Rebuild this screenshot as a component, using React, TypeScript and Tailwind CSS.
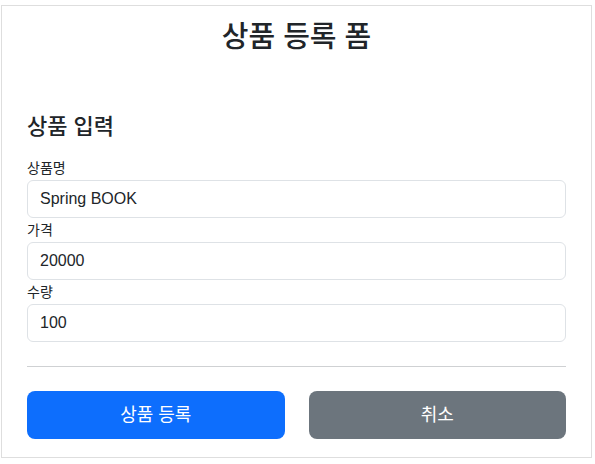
import { useState } from 'react'

type Field = {
  id: string
  label: string
  value: string
}

const initialFields: Field[] = [
  { id: 'itemName', label: '상품명', value: 'Spring BOOK' },
  { id: 'price', label: '가격', value: '20000' },
  { id: 'quantity', label: '수량', value: '100' },
]

export default function App() {
  const [fields, setFields] = useState(initialFields)

  const handleChange = (id: string, value: string) => {
    setFields((prev) => prev.map((f) => (f.id === id ? { ...f, value } : f)))
  }

  return (
    <div className="min-h-screen bg-white pt-[5px] pl-[1px] font-['Liberation_Sans','Noto_Sans_CJK_KR',sans-serif] text-[#212529]">
      <div className="flex h-[453px] w-[591px] flex-col border border-[#dedede] px-[25px]">
        {/* TITLE */}
        <h2 className="mt-[11px] flex h-[40px] items-center justify-center text-[29px] font-medium leading-none">
          상품 등록 폼
        </h2>

        {/* FORM */}
        <h4 className="mt-[55px] flex h-[30px] items-center text-[22px] font-medium leading-none">상품 입력</h4>

        <form className="mt-[14px] flex flex-col" onSubmit={(e) => e.preventDefault()}>
          {fields.map((field) => (
            <div key={field.id}>
              <label htmlFor={field.id} className="flex h-[24px] items-center text-[14px] leading-none">
                {field.label}
              </label>
              <input
                id={field.id}
                value={field.value}
                onChange={(e) => handleChange(field.id, e.target.value)}
                className="block h-[38px] w-full rounded-[6px] border border-[#dee2e6] bg-white px-[12px] text-[16px] text-[#212529] outline-none"
              />
            </div>
          ))}

          <hr className="mt-[24px] border-t border-[#cfd1d3]" />

          <div className="mt-[24px] grid grid-cols-2 gap-6">
            <button
              type="submit"
              className="h-[48px] rounded-[8px] bg-[#0d6efd] text-[18px] text-white hover:bg-[#0b5ed7]"
            >
              상품 등록
            </button>
            <button
              type="button"
              className="h-[48px] rounded-[8px] bg-[#6c757d] text-[18px] text-white hover:bg-[#5c636a]"
            >
              취소
            </button>
          </div>
        </form>
      </div>
    </div>
  )
}
